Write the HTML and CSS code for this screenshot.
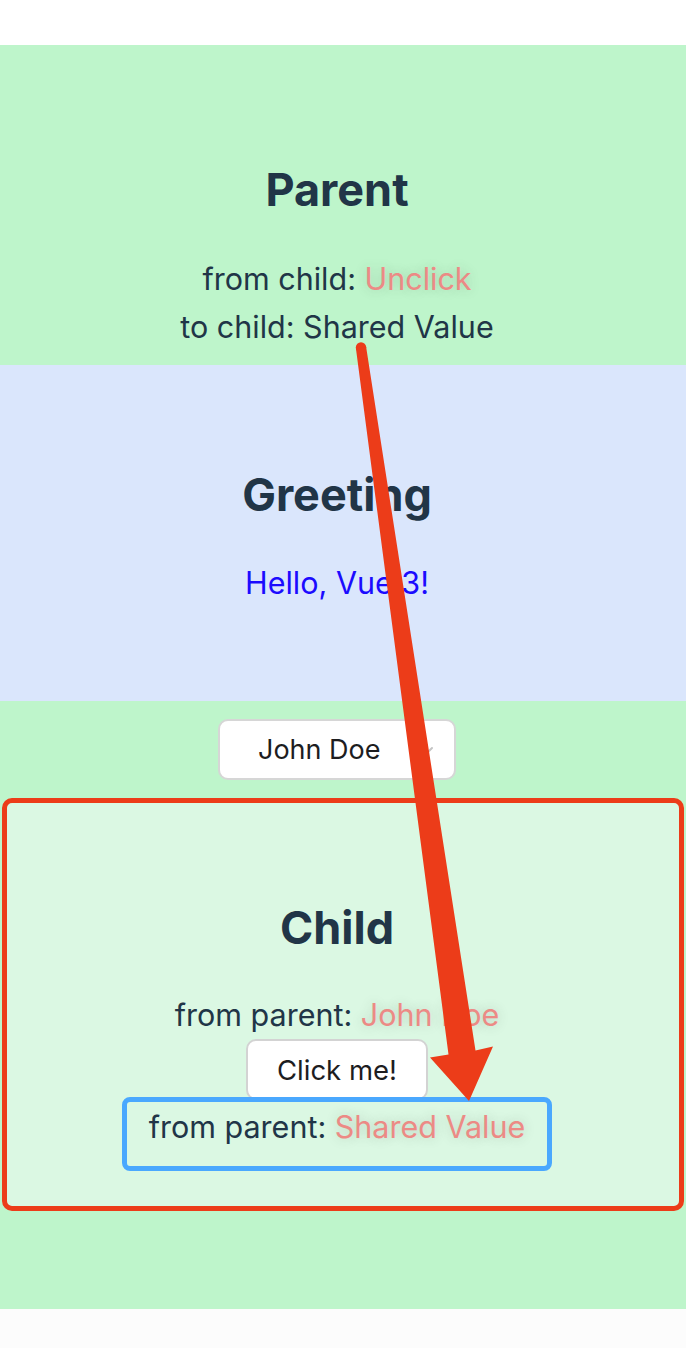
FILE: index.html
```html
<!DOCTYPE html>
<html lang="en">
<head>
<meta charset="utf-8">
<title>Parent / Child</title>
<link rel="stylesheet" href="styles.css">
</head>
<body>
<div class="page">
  <div class="top-gap"></div>
  <section class="parent">
    <div class="parent-head center">
      <h2 class="title parent-title">Parent</h2>
      <p class="line">from child: <span class="value">Unclick</span></p>
      <p class="line">to child: Shared Value</p>
    </div>
    <section class="greeting">
      <div class="center">
        <h2 class="title greeting-title">Greeting</h2>
        <p class="line hello">Hello, Vue 3!</p>
      </div>
    </section>
    <div class="select-row center">
      <div class="select">
        <span class="select-text">John Doe</span>
        <svg class="chevron" width="14" height="10" viewBox="0 0 14 10"><path d="M2 2 L7 7 L12 2" fill="none" stroke="#c4c4c4" stroke-width="2" stroke-linecap="round" stroke-linejoin="round"/></svg>
      </div>
    </div>
    <section class="child">
      <div class="center">
        <h2 class="title child-title">Child</h2>
        <p class="line">from parent: <span class="value">John Doe</span></p>
        <button class="btn" type="button">Click me!</button>
        <div class="highlight">
          <p class="line">from parent: <span class="value">Shared Value</span></p>
        </div>
      </div>
    </section>
  </section>
  <div class="footer"></div>
  <svg class="annot" width="686" height="1348" viewBox="0 0 686 1348">
    <circle cx="361" cy="347.5" r="5.2" fill="#ec3c19"/>
    <polygon points="355.9,348.2 448.5,1054.5 430,1057.5 469,1101 493,1046.5 475.5,1050.5 366.1,346.8" fill="#ec3c19"/>
  </svg>
</div>
</body>
</html>
```

FILE: styles.css
```css
* { box-sizing: border-box; }

html, body {
  margin: 0;
  padding: 0;
  background: #ffffff;
}

body {
  font-family: Inter, "Noto Sans", "Liberation Sans", sans-serif;
  color: #213547;
  -webkit-font-smoothing: antialiased;
}

.page {
  position: relative;
  width: 686px;
  min-height: 1348px;
}

.top-gap { height: 45px; }

.parent {
  background: #bef5cb;
  padding-bottom: 98px;
}

.center {
  text-align: center;
  padding-right: 12px;
}

.title {
  margin: 0;
  font-weight: 700;
  font-size: 45px;
  line-height: 54px;
  color: #213547;
}

.line {
  margin: 0;
  font-size: 30.5px;
  line-height: 48px;
}

.value {
  color: #ec8a85;
  text-shadow: 0 0 12px rgba(60, 60, 60, 0.22);
}

.parent-head {
  padding-top: 118px;
  padding-bottom: 14px;
}

.parent-title { margin-bottom: 38px; }

.greeting {
  background: #dae6fc;
  padding-top: 103px;
  padding-bottom: 94px;
}

.greeting-title { margin-bottom: 37px; }

.hello { color: #1b0bff; }

.select-row {
  padding-top: 18px;
  padding-bottom: 18px;
  display: flex;
  justify-content: center;
}

.select {
  width: 238px;
  height: 61px;
  background: #ffffff;
  border: 2px solid #d6d6d6;
  border-radius: 10px;
  display: flex;
  align-items: center;
  padding-left: 38px;
  padding-right: 20px;
  justify-content: space-between;
  font-size: 27px;
  color: #1d1d1f;
}

.chevron { margin-top: 2px; }

.child {
  margin: 0 2px;
  background: #dbf8e3;
  border: 5px solid #ec3c19;
  border-radius: 10px;
  padding-top: 98px;
  padding-bottom: 35px;
}

.child-title { margin-bottom: 36px; }

.btn {
  display: block;
  margin: 0 auto;
  width: 182px;
  height: 61px;
  background: #ffffff;
  border: 2px solid #d3d3d3;
  border-radius: 10px;
  font-family: inherit;
  font-size: 27.5px;
  color: #1d1d1f;
  padding: 0;
}

.highlight {
  width: 430px;
  margin: -3px auto 0;
  border: 5px solid #4aa8fe;
  border-radius: 8px;
  padding-top: 1px;
  padding-bottom: 15px;
}

.footer {
  height: 39px;
  background: #fcfcfc;
}

.annot {
  position: absolute;
  top: 0;
  left: 0;
  pointer-events: none;
}
```
